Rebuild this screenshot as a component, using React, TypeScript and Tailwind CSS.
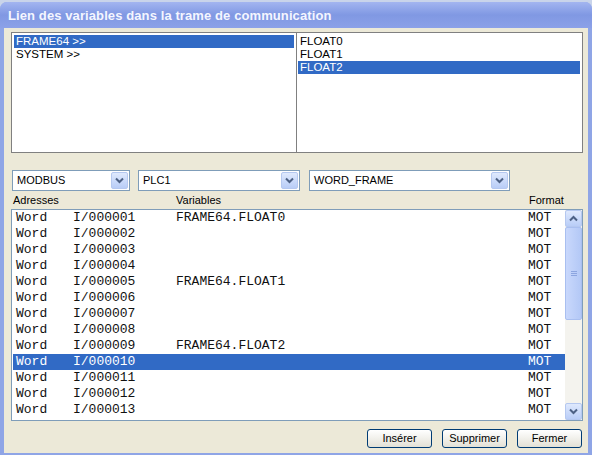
import React from "react";

const rows = [
  { addr: "I/000001", v: "FRAME64.FLOAT0" },
  { addr: "I/000002", v: "" },
  { addr: "I/000003", v: "" },
  { addr: "I/000004", v: "" },
  { addr: "I/000005", v: "FRAME64.FLOAT1" },
  { addr: "I/000006", v: "" },
  { addr: "I/000007", v: "" },
  { addr: "I/000008", v: "" },
  { addr: "I/000009", v: "FRAME64.FLOAT2" },
  { addr: "I/000010", v: "" },
  { addr: "I/000011", v: "" },
  { addr: "I/000012", v: "" },
  { addr: "I/000013", v: "" },
];

const Chevron = ({ up = false }: { up?: boolean }) => (
  <svg width="9" height="7" viewBox="0 0 9 7">
    <path
      d={up ? "M1 5.5 L4.5 2 L8 5.5" : "M1 1.5 L4.5 5 L8 1.5"}
      fill="none"
      stroke="#4d6185"
      strokeWidth="2"
    />
  </svg>
);

const Combo = ({ label, w }: { label: string; w: string }) => (
  <div
    className={`${w} h-[21px] bg-white border border-[#7f9db9] flex items-center justify-between pl-[4px] pr-[1px]`}
  >
    <span className="text-[11px]">{label}</span>
    <div className="w-[17px] h-[17px] rounded-[2px] border border-[#b5c8f0] bg-gradient-to-b from-[#dfe9fd] to-[#b9cdf7] flex items-center justify-center">
      <Chevron />
    </div>
  </div>
);

const Button = ({ label }: { label: string }) => (
  <button className="w-[65px] h-[19px] rounded-[3px] border border-[#003c74] bg-gradient-to-b from-white to-[#e3e1d6] text-[11px] leading-none">
    {label}
  </button>
);

export default function App() {
  return (
    <div
      className="w-[592px] h-[455px] bg-[#c9d4ea] overflow-hidden"
      style={{ fontFamily: "'Liberation Sans', Arial, sans-serif" }}
    >
      <div className="w-[592px] h-[455px] mt-[2px] rounded-t-[7px] bg-[#8fa5e6] flex flex-col pl-[4px] pr-[4px] pb-[4px]">
        <div className="h-[26px] -ml-[4px] -mr-[4px] rounded-t-[7px] bg-gradient-to-b from-[#a3b5f0] via-[#8098e3] to-[#8ca1e8] flex items-center px-[8px]">
          <span className="text-[#f4f6ff] font-bold text-[13px] tracking-[0.1px] mt-[2px]">
            Lien des variables dans la trame de communication
          </span>
        </div>
        <div className="flex-1 bg-[#ece9d8] flex flex-col pt-[4px] pl-[7px] pr-[5px] text-black">
          <div className="flex h-[121px] border border-[#808080]">
            <div className="w-[285px] bg-white border-r border-[#808080] text-[11.5px] leading-[13px] pt-[2px] px-[2px]">
              <div className="bg-[#316ac5] text-white px-[2px]">FRAME64 &gt;&gt;</div>
              <div className="px-[2px]">SYSTEM &gt;&gt;</div>
            </div>
            <div className="flex-1 bg-white text-[11.5px] leading-[13px] pt-[2px] px-[1px]">
              <div className="px-[2px]">FLOAT0</div>
              <div className="px-[2px]">FLOAT1</div>
              <div className="bg-[#316ac5] text-white px-[2px] mr-[1px]">FLOAT2</div>
            </div>
          </div>

          <div className="flex mt-[17px] gap-[8px] pl-[1px]">
            <Combo label="MODBUS" w="w-[118px]" />
            <Combo label="PLC1" w="w-[162px]" />
            <div className="ml-[1px]">
              <Combo label="WORD_FRAME" w="w-[201px]" />
            </div>
          </div>

          <div className="flex h-[17px] items-center text-[11px] mt-[1px]">
            <span className="w-[165px] pl-[2px]">Adresses</span>
            <span className="w-[353px]">Variables</span>
            <span>Format</span>
          </div>

          <div className="h-[212px] border border-[#7f9db9] bg-white flex">
            <div
              className="flex-1 pl-[1px]"
              style={{ fontFamily: "'Liberation Mono', 'Courier New', monospace" }}
            >
              {rows.map((r, i) => (
                <div
                  key={r.addr}
                  className={`h-[16px] flex items-center text-[13px] ${
                    i === 9 ? "bg-[#316ac5] text-white" : "text-[#111]"
                  }`}
                >
                  <span className="w-[60px] pl-[3px]">Word</span>
                  <span className="w-[103px]">{r.addr}</span>
                  <span className="w-[352px]">{r.v}</span>
                  <span>MOT</span>
                </div>
              ))}
            </div>
            <div className="w-[17px] bg-[#f4f3ee] flex flex-col">
              <div className="h-[17px] rounded-[2px] border border-[#b5c8f0] bg-gradient-to-b from-[#dfe9fd] to-[#b9cdf7] flex items-center justify-center">
                <Chevron up />
              </div>
              <div className="h-[93px] rounded-[2px] border border-[#a9bff0] bg-gradient-to-r from-[#c9d8fc] to-[#b3c8f6] flex items-center justify-center">
                <div className="flex flex-col gap-[1px]">
                  <div className="w-[6px] h-[1px] bg-[#8ca5e0]" />
                  <div className="w-[6px] h-[1px] bg-[#8ca5e0]" />
                  <div className="w-[6px] h-[1px] bg-[#8ca5e0]" />
                </div>
              </div>
              <div className="flex-1" />
              <div className="h-[17px] rounded-[2px] border border-[#b5c8f0] bg-gradient-to-b from-[#dfe9fd] to-[#b9cdf7] flex items-center justify-center">
                <Chevron />
              </div>
            </div>
          </div>

          <div className="flex justify-end gap-[10px] mt-[8px] pr-[1px]">
            <Button label="Insérer" />
            <Button label="Supprimer" />
            <Button label="Fermer" />
          </div>
        </div>
      </div>
    </div>
  );
}
